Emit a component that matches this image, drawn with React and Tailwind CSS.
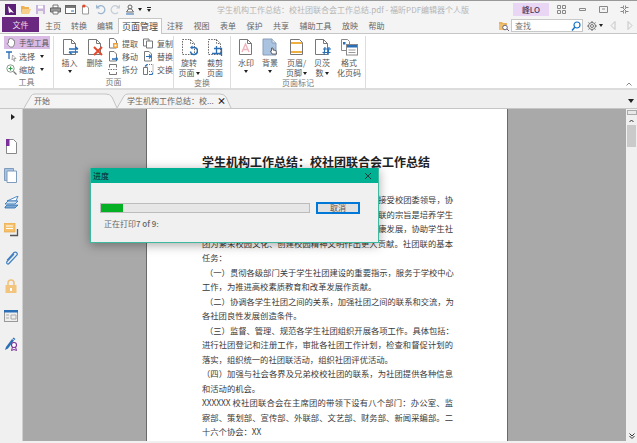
import React from "react";

const font = "font-['Noto_Sans_CJK_SC','Noto_Sans',sans-serif]";

const Icon = ({ w = 18, h = 18, box, className = "", children }) => (
  <svg width={w} height={h} viewBox={box || `0 0 ${w} ${h}`} fill="none" className={`shrink-0 ${className}`}>
    {children}
  </svg>
);

const Sheet = ({ dashed }) => (
  <path
    d="M2.5 1.5h8l4 4v11h-12z M10.5 1.5v4h4"
    stroke={dashed ? "#666" : "#777"}
    strokeDasharray={dashed ? "1.5 1.2" : undefined}
    fill="#fff"
  />
);

const Caret = ({ className = "" }) => (
  <span className={`inline-block w-0 h-0 border-x-[2px] border-x-transparent border-t-[3px] border-t-[#222] ${className}`} />
);

// big ribbon icons
const InsertIcon = () => (
  <Icon>
    <Sheet />
    <path d="M8 11h9M14 8.500l3 2.500M8 14h9M11 16.500l-3-2.500" stroke="#2a6fb5" strokeWidth="1.4" />
  </Icon>
);
const DeleteIcon = () => (
  <Icon>
    <Sheet />
    <path d="M8 9l8 8M16 9l-8 8" stroke="#e2492b" strokeWidth="2" />
  </Icon>
);
const RotateIcon = () => (
  <Icon>
    <Sheet dashed />
    <path d="M11 9.500h3a3.500 3.500 0 1 1-3.500 4" stroke="#2a6fb5" strokeWidth="1.5" />
    <path d="M12.500 7.500v4l-2.500-2z" fill="#2a6fb5" />
  </Icon>
);
const CropIcon = () => (
  <Icon>
    <Sheet dashed />
    <path d="M10.500 8v8M8 10.500h7.500V18M6 15.500h9.500" stroke="#2a6fb5" strokeWidth="1.3" />
  </Icon>
);
const WatermarkIcon = () => (
  <Icon>
    <Sheet />
    <path d="M5 14l3.500-8 3.500 8M6.500 11.500h4" stroke="#f0b4bd" strokeWidth="1.500" />
  </Icon>
);
const BackgroundIcon = () => (
  <Icon>
    <path d="M2 1h9l4 4v12H2z" fill="#a9c3e0" stroke="#8a9fb8" />
    <path d="M11 1v4h4" fill="#dbe6f2" stroke="#8a9fb8" />
    <path d="M11 16l-1.500-3 1 0v-3h1.500v2l3 .5.500 3.500z" fill="#fff" stroke="#333" strokeWidth=".7" />
  </Icon>
);
const HeaderIcon = () => (
  <Icon>
    <path d="M2.500 1.500h9l3 3v12h-12z" fill="#fff" stroke="#777" />
    <rect x="3" y="4" width="11" height="2" fill="#f0b040" />
    <rect x="3" y="13" width="11" height="2" fill="#f0b040" />
  </Icon>
);
const BatesIcon = () => (
  <Icon>
    <Sheet />
    <path d="M10 11h8M9.500 14.500h8M12 9l-1 8M16 9l-1 8" stroke="#2a6fb5" strokeWidth="1.200" />
  </Icon>
);
const FormatIcon = () => (
  <Icon>
    <path d="M1.500 1.500h6l2 2v9h-8z" fill="#fff" stroke="#888" />
    <rect x="3" y="4" width="2.500" height="2.500" fill="#2a6fb5" />
    <rect x="6.500" y="6.500" width="11" height="10.500" fill="#fff" stroke="#888" />
    <rect x="7" y="7" width="10" height="2.500" fill="#2a6fb5" />
    <path d="M8.500 12h7M8.500 14.500h7" stroke="#999" />
  </Icon>
);

// small ribbon icons, 11px
const Small = ({ children }) => <Icon w={11} h={11}>{children}</Icon>;
const SmallSheet = ({ dashed }) => (
  <path d="M1.500 .500h4.500l2.500 2.500v7h-7z" stroke="#777" fill="#fff" strokeDasharray={dashed ? "1 1" : undefined} />
);
const ExtractIcon = () => (
  <Small><SmallSheet /><rect x="5" y="5" width="5" height="5" fill="#f0a030" /><rect x="6.500" y="6.500" width="2" height="2" fill="#fff" /></Small>
);
const MoveIcon = () => (
  <Small><SmallSheet /><path d="M4 8h6M8.500 6v4" stroke="#2a6fb5" strokeWidth="1.300" /></Small>
);
const SplitIcon = () => (
  <Small>
    <path d="M1.500 3.500v-3h7v3M1.500 8v2.500h7V8" stroke="#777" />
    <path d="M0 5.500h10" stroke="#777" strokeDasharray="1.500 1" />
  </Small>
);
const CopyIcon = () => (
  <Small><path d="M.5 1h5.500v7H.5z" stroke="#777" fill="#fff" /><path d="M3.500 3h6v7h-6z" stroke="#777" fill="#fff" /></Small>
);
const ReplaceIcon = () => (
  <Small><SmallSheet /><path d="M3 5.500h4.500M6 3.500l2 2-2 2" stroke="#2a6fb5" strokeWidth="1.100" /></Small>
);
const SwapIcon = () => (
  <Small>
    <path d="M4 .5h6v7H4z" stroke="#777" strokeDasharray="1 1" />
    <path d="M.5 3.500h4v7h-4z" stroke="#777" fill="#fff" />
    <path d="M2 2.500l2-2M6 10.500h3l1-2" stroke="#2a6fb5" strokeWidth="1.200" />
  </Small>
);

const Large = ({ w, icon, lines, caret }) => (
  <div className="flex flex-col items-center" style={{ width: w }}>
    <div className="h-[18px] flex items-center justify-center">{icon}</div>
    <div className="mt-[2px] text-[8px] leading-[10px] text-[#555] text-center whitespace-nowrap">
      {lines[0]}
    </div>
    {lines[1] ? (
      <div className="text-[8px] leading-[10px] text-[#555] text-center whitespace-nowrap flex items-center gap-[1px]">
        {lines[1]}
        {caret && <Caret />}
      </div>
    ) : (
      caret && <Caret className="mt-[2px]" />
    )}
  </div>
);

const SmallRow = ({ icon, label }) => (
  <div className="h-[13px] flex items-center gap-[3px] text-[8px] text-[#555] whitespace-nowrap">
    {icon}
    <span>{label}</span>
  </div>
);

const Group = ({ width, label, children }) => (
  <div className="flex flex-col h-full border-r border-[#ddd]" style={{ width }}>
    <div className="flex-1 flex">{children}</div>
    <div className="h-[11px] leading-[10px] text-[8px] text-[#777] text-center">{label}</div>
  </div>
);

const TitleBar = () => (
  <div className="h-[18px] flex items-center bg-[#f4f4f4] border-t border-[#999] relative">
    <div className="flex items-center gap-[4px] pl-[5px] w-[150px]">
      <Icon w={11} h={11}><rect width="11" height="11" fill="#5b1f78" /><path d="M3 2l6 7-3-1-2 1z" fill="#fff" /></Icon>
      <Icon w={11} h={11}><path d="M1 2h3l1 1h4v2H3l-2 5z" fill="#eeb050" /><path d="M3 5h8l-2 5H1z" fill="#f6cf8a" /></Icon>
      <Icon w={11} h={11}><path d="M1 1h9v9H1z" fill="#c9b4dc" /><path d="M3 1.500h5v3H3z" fill="#fff" /><path d="M3 7h5v3H3z" fill="#eee" /></Icon>
      <Icon w={11} h={11}><path d="M3 1h5v3H3z" fill="#fff" stroke="#777" /><path d="M.5 4h10v4H.5z" fill="#999" stroke="#666" /><path d="M3 7h5v3H3z" fill="#fff" stroke="#777" /></Icon>
      <Icon w={11} h={11}><rect x=".5" y="1.500" width="10" height="8" fill="#fff" stroke="#666" /><rect x="1" y="2" width="9" height="2" fill="#777" /><path d="M6 7h3" stroke="#2a6fb5" /></Icon>
      <Icon w={11} h={11}><path d="M2.500 2h4l2 2v6h-6z" fill="#fff" stroke="#999" /><path d="M3 .5l1 2-2 1z" fill="#e2492b" /><circle cx="4" cy="2" r="1.500" fill="#e2492b" /></Icon>
      <Icon w={11} h={11}><path d="M2.500 3.500a4 4 0 1 1 .5 5" stroke="#9db7cf" strokeWidth="1.300" /><path d="M1 .5v4h4z" fill="#9db7cf" /></Icon>
      <Icon w={11} h={11}><path d="M8.500 3.500a4 4 0 1 0-.5 5" stroke="#c6ced6" strokeWidth="1.300" /><path d="M10 .5v4H6z" fill="#c6ced6" /></Icon>
      <Icon w={11} h={11}><circle cx="5" cy="3" r="2" stroke="#666" /><path d="M3.500 5h3l2 3h-7z" fill="#fff" stroke="#666" /><path d="M1 10h8" stroke="#2a6fb5" /></Icon>
      <div className="flex items-center gap-[3px] -ml-[2px]">
        <Caret />
        <div className="flex flex-col items-center gap-[1px] ml-[2px]">
          <span className="w-[4px] h-px bg-[#222]" />
          <Caret />
        </div>
      </div>
    </div>
    <div className="ml-[67px] w-[296px] text-[8px] leading-none text-[#b4b4b4] whitespace-nowrap">
      学生机构工作总结：校社团联合会工作总结.pdf - 福昕PDF编辑器个人版
    </div>
    <div className="w-[36px] h-[13px] bg-[#e8d6f4] text-[#4a3a60] text-[8px] flex items-center justify-center font-medium">
      峰LO
    </div>
    <div className="flex-1 flex items-center justify-around pl-[2px] pr-[2px]">
      <Icon w={9} h={9}><path d="M.5.5h3v3h-3zM5.500.5h3v3h-3zM.5 5.500h3v3h-3zM5.500 5.500h3v3h-3z" stroke="#888" /></Icon>
      <Icon w={9} h={9}><path d="M1.500 3.500h6v2h-6z" stroke="#888" /></Icon>
      <Icon w={9} h={9}><path d="M.5 1.500h8v6h-8zM3 4h3" stroke="#888" /></Icon>
      <Icon w={9} h={9}><path d="M.5 2.500h3v-2M8.500 2.500h-3v-2M.5 6.500h3v2M8.500 6.500h-3v2M3 3l3 3M6 3L3 6" stroke="#888" /></Icon>
    </div>
  </div>
);

const MenuRow = () => (
  <div className="h-[16px] flex items-end bg-[#f4f4f4] border-b border-[#c6c6c6] pl-[2px] relative">
    <div className="w-[37px] h-[15px] mb-px bg-[#6a2880] text-[#e9ddee] text-[8px] flex items-center justify-center">文件</div>
    <div className="flex items-center h-[15px] text-[8px] text-[#666] ml-[6px] gap-[10px]">
      <span>主页</span>
      <span>转换</span>
      <span>编辑</span>
    </div>
    <div className="w-[44px] h-[16px] -mb-px ml-[5px] mr-[5px] bg-white border border-b-0 border-[#c6c6c6] text-[9px] text-[#444] flex items-center justify-center">
      页面管理
    </div>
    <div className="flex items-center h-[15px] text-[8px] text-[#666] gap-[10.500px]">
      <span>注释</span>
      <span>视图</span>
      <span>表单</span>
      <span>保护</span>
      <span>共享</span>
      <span>辅助工具</span>
      <span>放映</span>
      <span>帮助</span>
    </div>
    <div className="ml-auto flex items-center h-[15px] pr-[4px]">
      <Icon w={10} h={10}><path d="M0 1h3l1 1h4v2H0z" fill="#e8b35c" /><path d="M0 3h6v6H0z" fill="#f0c070" /><circle cx="6" cy="6.500" r="2.300" stroke="#667" fill="#fff" /><path d="M8 8l2 2" stroke="#667" /></Icon>
      <div className="ml-[2px] w-[72px] h-[13px] bg-white border border-[#c8c8c8] text-[8px] text-[#777] flex items-center pl-[3px] justify-between pr-[1px]">
        查找
        <Icon w={10} h={10}><circle cx="6" cy="4" r="3" stroke="#1a73c8" strokeWidth="1.200" /><path d="M4 6L1 9.500" stroke="#1a73c8" strokeWidth="1.500" /></Icon>
      </div>
      <Icon w={10} h={10} className="ml-[4px]"><circle cx="5" cy="5" r="3.500" stroke="#777" /><circle cx="5" cy="5" r="1.500" stroke="#777" /><path d="M5 0v2M5 8v2M0 5h2M8 5h2M1.500 1.500l1 1M7.500 7.500l1 1M8.500 1.500l-1 1M1.500 8.500l1-1" stroke="#777" /></Icon>
      <Caret className="ml-[2px]" />
      <Icon w={6} h={9} className="ml-[7px]"><path d="M5 .5L1 4.500l4 4z" stroke="#c4c4c4" /></Icon>
      <Icon w={6} h={9} className="ml-[11px]"><path d="M1 .5l4 4-4 4z" stroke="#c4c4c4" /></Icon>
    </div>
  </div>
);

const Ribbon = () => (
  <div className="h-[56px] flex bg-white border-b-2 border-[#dcdcdc] pt-[2px] relative">
    <Group width={54} label="工具">
      <div className="flex flex-col w-full pl-[4px]">
        <div className="w-[46px] h-[13px] bg-[#d9bbe6] flex items-center gap-[3px] pl-[2px] text-[7.500px] text-[#555] whitespace-nowrap">
          <Icon w={10} h={11}><path d="M2.500 6V2.500l1 0V1.500l1 0 .5 0 1 .5 1 0 .5 1.500 1 0V7L7 10H4L1 6.500z" fill="#fff" stroke="#777" strokeWidth=".8" /></Icon>
          手型工具
        </div>
        <div className="h-[13px] mt-[1px] flex items-center gap-[2px] text-[8px] text-[#555] pl-[2px] whitespace-nowrap">
          <Icon w={11} h={11}><path d="M0 1h6M3 1v7" stroke="#2a6fb5" strokeWidth="1.300" /><path d="M6.500 4l3.500 3.500-2 0 1 2.500-1 .3-1-2.500-1 1z" fill="#fff" stroke="#777" strokeWidth=".6" /></Icon>
          选择
          <Caret className="ml-[3px]" />
        </div>
        <div className="h-[13px] flex items-center gap-[2px] text-[8px] text-[#555] pl-[2px] whitespace-nowrap">
          <Icon w={11} h={11}><circle cx="4.500" cy="4.500" r="3.700" stroke="#8a9a8a" /><path d="M2.500 4.500h4M4.500 2.500v4" stroke="#2fa04a" /><path d="M7.500 7.500l3 3" stroke="#777" strokeWidth="1.200" /></Icon>
          缩放
          <Caret className="ml-[3px]" />
        </div>
      </div>
    </Group>
    <Group width={120} label="页面">
      <div className="flex pl-[3px] pt-[2px]">
        <Large w={25} icon={<InsertIcon />} lines={["插入"]} caret />
        <Large w={25} icon={<DeleteIcon />} lines={["删除"]} />
        <div className="flex flex-col ml-[1px] -mt-[1px]">
          <SmallRow icon={<ExtractIcon />} label="提取" />
          <SmallRow icon={<MoveIcon />} label="移动" />
          <SmallRow icon={<SplitIcon />} label="拆分" />
        </div>
        <div className="flex flex-col ml-[5px] -mt-[1px]">
          <SmallRow icon={<CopyIcon />} label="复制" />
          <SmallRow icon={<ReplaceIcon />} label="替换" />
          <SmallRow icon={<SwapIcon />} label="交换" />
        </div>
      </div>
    </Group>
    <Group width={57} label="变换">
      <div className="flex pl-[2px] pt-[2px]">
        <Large w={26} icon={<RotateIcon />} lines={["旋转", "页面"]} caret />
        <Large w={26} icon={<CropIcon />} lines={["裁剪", "页面"]} />
      </div>
    </Group>
    <Group width={135} label="页面标记">
      <div className="flex pl-[3px] pt-[2px]">
        <Large w={24} icon={<WatermarkIcon />} lines={["水印"]} caret />
        <Large w={24} icon={<BackgroundIcon />} lines={["背景"]} caret />
        <Large w={29} icon={<HeaderIcon />} lines={["页眉/", "页脚"]} caret />
        <Large w={22} icon={<BatesIcon />} lines={["贝茨", "数"]} caret />
        <Large w={32} icon={<FormatIcon />} lines={["格式", "化页码"]} />
      </div>
    </Group>
    <div className="flex-1 flex items-end justify-end pr-[5px] pb-[2px]">
      <Icon w={6} h={4}><path d="M.5 3.500L3 1l2.500 2.500" stroke="#888" /></Icon>
    </div>
  </div>
);

const DocTab = ({ width, children }) => (
  <div className="relative h-[15px] flex items-center" style={{ width }}>
    <svg width={width} height="15" className="absolute inset-0" fill="none">
      <path d={`M0 15L7 3Q8 1 11 1H${width - 12}Q${width - 8} 1 ${width - 6} 4L${width - 1} 15`} fill="#f4f4f4" stroke="#c4c4c4" />
    </svg>
    <div className="relative flex-1 flex items-center pl-[10px] pr-[6px] text-[8px] text-[#666] whitespace-nowrap">{children}</div>
  </div>
);

const DocTabs = () => (
  <div className="h-[19px] flex items-end bg-[#efefef] border-b border-[#c6c6c6] pl-[24px] relative">
    <DocTab width={94}>开始</DocTab>
    <div className="-ml-[1px]">
      <DocTab width={115}>
        <span>学生机构工作总结：校...</span>
        <span className="ml-auto text-[#222] text-[9px] leading-none font-bold">×</span>
      </DocTab>
    </div>
    <Caret className="absolute right-[3px] top-[9px] border-x-[3px]! border-t-[4px]!" />
  </div>
);

const SideBar = () => (
  <div className="w-[23px] shrink-0 bg-[#f0f0f0] border-r border-[#d0d0d0] flex flex-col items-center pt-[5px]">
    <Icon w={5} h={6} className="ml-[5px]"><path d="M0 0l4 3-4 3z" fill="#222" /></Icon>
    <Icon w={13} h={15} className="mt-[19px]"><path d="M1.500 .5h7l3 3v11h-10z" fill="#fff" stroke="#888" /><rect x="1" y="0" width="3.500" height="7" fill="#7a2f9a" /></Icon>
    <Icon w={14} h={15} className="mt-[14px]"><path d="M.5.5h9v12h-9z" fill="#a9c3e0" stroke="#7f9cbc" /><path d="M3 3h9.500v11.500H3z" fill="#fff" stroke="#7f9cbc" /></Icon>
    <Icon w={15} h={13} className="mt-[13px]"><path d="M3 5L14 0l-2 5z" fill="#fff" stroke="#2a6fb5" strokeWidth=".8" /><path d="M1 8l3-3h10l-3 3z" fill="#cfe0f0" stroke="#2a6fb5" strokeWidth=".8" /><path d="M1 11l2-2h11l-3 3H1z" fill="#7fa8d0" stroke="#2a6fb5" strokeWidth=".8" /></Icon>
    <Icon w={15} h={14} className="mt-[14px]"><rect x="0" y="0" width="11" height="9" fill="#f5c26b" stroke="#e0a040" strokeWidth=".6" /><path d="M2 3h7M2 5.500h7" stroke="#fff" /><path d="M13.500 6v6.500H6" stroke="#555" strokeWidth="1.300" /></Icon>
    <Icon w={13} h={14} className="mt-[14px]"><path d="M2 9.500l7-8a2 2 0 0 1 3 2.500l-8 8.500a1.300 1.300 0 0 1-2-1.800l7-7.500" stroke="#3f7fc0" strokeWidth="1.200" /></Icon>
    <Icon w={12} h={14} className="mt-[14px]"><path d="M3 6V4a3 3 0 0 1 6 0v2" stroke="#f0bf78" strokeWidth="1.500" /><rect x="0.500" y="6" width="11" height="8" fill="#f3c47e" /><rect x="5" y="9" width="2" height="3" fill="#fff" /></Icon>
    <Icon w={14} h={12} className="mt-[17px]"><rect x=".5" y=".5" width="13" height="11" fill="#eee" stroke="#999" /><rect x="0" y="0" width="14" height="2.500" fill="#2a6fb5" /><path d="M2 5h3M2 8h3M7 5h5v4H7z" stroke="#aaa" /></Icon>
    <Icon w={14} h={14} className="mt-[15px]"><path d="M1 13l1-3 6-8 2 1.500-6 8z" fill="#2a6fb5" /><path d="M9 1l2 1.500" stroke="#2a6fb5" strokeWidth="1.500" /><circle cx="10" cy="8" r="2.500" stroke="#7a2f9a" fill="#fff" strokeWidth="1.100" /><path d="M8.500 10l-1 3.500 2.500-1 2.500 1-1-3.500" stroke="#7a2f9a" /></Icon>
  </div>
);

// only the ends of these lines show past the dialog
const partLines = ["接受校团委领导，协", "联的宗旨是培养学生", "康发展，协助学生社"];

const Justified = ({ children, indent }) => (
  <div className={`[text-align:justify] [text-align-last:justify] whitespace-nowrap ${indent ? "pl-[3px]" : ""}`}>{children}</div>
);

const Page = () => (
  <div className="w-[362px] shrink-0 bg-white border-x border-[#6a6a6a] pl-[55px] pr-[54px] pt-[43px] text-[8.300px] leading-[14.500px] text-[#3a3a3a]">
    <div className="text-[12px] leading-[20px] font-bold text-[#222] whitespace-nowrap mb-[20px]">学生机构工作总结：校社团联合会工作总结</div>
    {partLines.map((l) => (
      <div key={l} className="text-right whitespace-nowrap">{l}</div>
    ))}
    <Justified>团为繁荣校园文化、创建校园精神文明作出更大贡献。社团联的基本</Justified>
    <div>任务：</div>
    <Justified indent>（一）贯彻各级部门关于学生社团建设的重要指示，服务于学校中心</Justified>
    <div>工作，为推进高校素质教育和改革发展作贡献。</div>
    <Justified indent>（二）协调各学生社团之间的关系，加强社团之间的联系和交流，为</Justified>
    <div>各社团良性发展创造条件。</div>
    <Justified indent>（三）监督、管理、规范各学生社团组织开展各项工作。具体包括：</Justified>
    <Justified>进行社团登记和注册工作，审批各社团工作计划，检查和督促计划的</Justified>
    <div>落实，组织统一的社团联活动，组织社团评优活动。</div>
    <Justified>（四）加强与社会各界及兄弟校校社团的联系，为社团提供各种信息</Justified>
    <div>和活动的机会。</div>
    <Justified>XXXXXX 校社团联合会在主席团的带领下设有八个部门：办公室、监</Justified>
    <Justified>察部、策划部、宣传部、外联部、文艺部、财务部、新闻采编部。二</Justified>
    <div>十六个协会：XX</div>
  </div>
);

const ScrollBar = () => (
  <div className="w-[11px] shrink-0 bg-[#f0f0f0] flex flex-col items-center">
    <div className="w-[10px] h-[5px] bg-[#e8e8e8] border border-[#aaa] mt-px" />
    <Icon w={5} h={4} className="mt-[4px]"><path d="M.5 3L2.500 1l2 2" stroke="#333" /></Icon>
    <div className="w-[9px] h-[22px] bg-[#cacaca] mt-[2px]" />
    <div className="flex-1" />
    <Icon w={6} h={6} className="mb-[2px]"><path d="M.5.5L3 3 5.500.5M.5 3L3 5.500 5.500 3" stroke="#333" /></Icon>
  </div>
);

const Dialog = () => (
  <div className="absolute left-[90px] top-[168px] w-[289px] h-[75px] bg-[#f0f0f0] border border-t-0 border-[#3fb8a0] shadow-[0_2px_10px_rgba(0,0,0,0.35)]">
    <div className="h-[15px] bg-[#00b092] flex items-center justify-between pl-[2px] pr-[6px] text-[8px] text-[#123]">
      进度
      <Icon w={8} h={8}><path d="M1 1l6 6M7 1L1 7" stroke="#1c3c38" /></Icon>
    </div>
    <div className="flex items-center mt-[19px] pl-[9px]">
      <div className="w-[210px] h-[10px] bg-[#e6e6e6] border border-[#bcbcbc]">
        <div className="h-full bg-[#06b025]" style={{ width: "10.500%" }} />
      </div>
      <div className="w-[44px] h-[12px] ml-[6px] bg-[#e1e1e1] border-2 border-[#0078d7] text-[8px] text-[#555] flex items-center justify-center">取消</div>
    </div>
    <div className="mt-[4px] pl-[13px] text-[8px] leading-[12px] text-[#666]">
      正在打印<span className="font-medium">7 of 9</span>:
    </div>
  </div>
);

export default function App() {
  return (
    <div className={`w-[637px] h-[443px] relative overflow-hidden flex flex-col bg-[#f0f0f0] ${font}`}>
      <TitleBar />
      <MenuRow />
      <Ribbon />
      <DocTabs />
      <div className="flex-1 min-h-0 flex mb-[2px] overflow-hidden">
        <SideBar />
        <div className="flex-1 min-w-0 flex bg-[#a9a9a9] pl-[123px] overflow-hidden">
          <Page />
        </div>
        <ScrollBar />
      </div>
      <Dialog />
    </div>
  );
}
